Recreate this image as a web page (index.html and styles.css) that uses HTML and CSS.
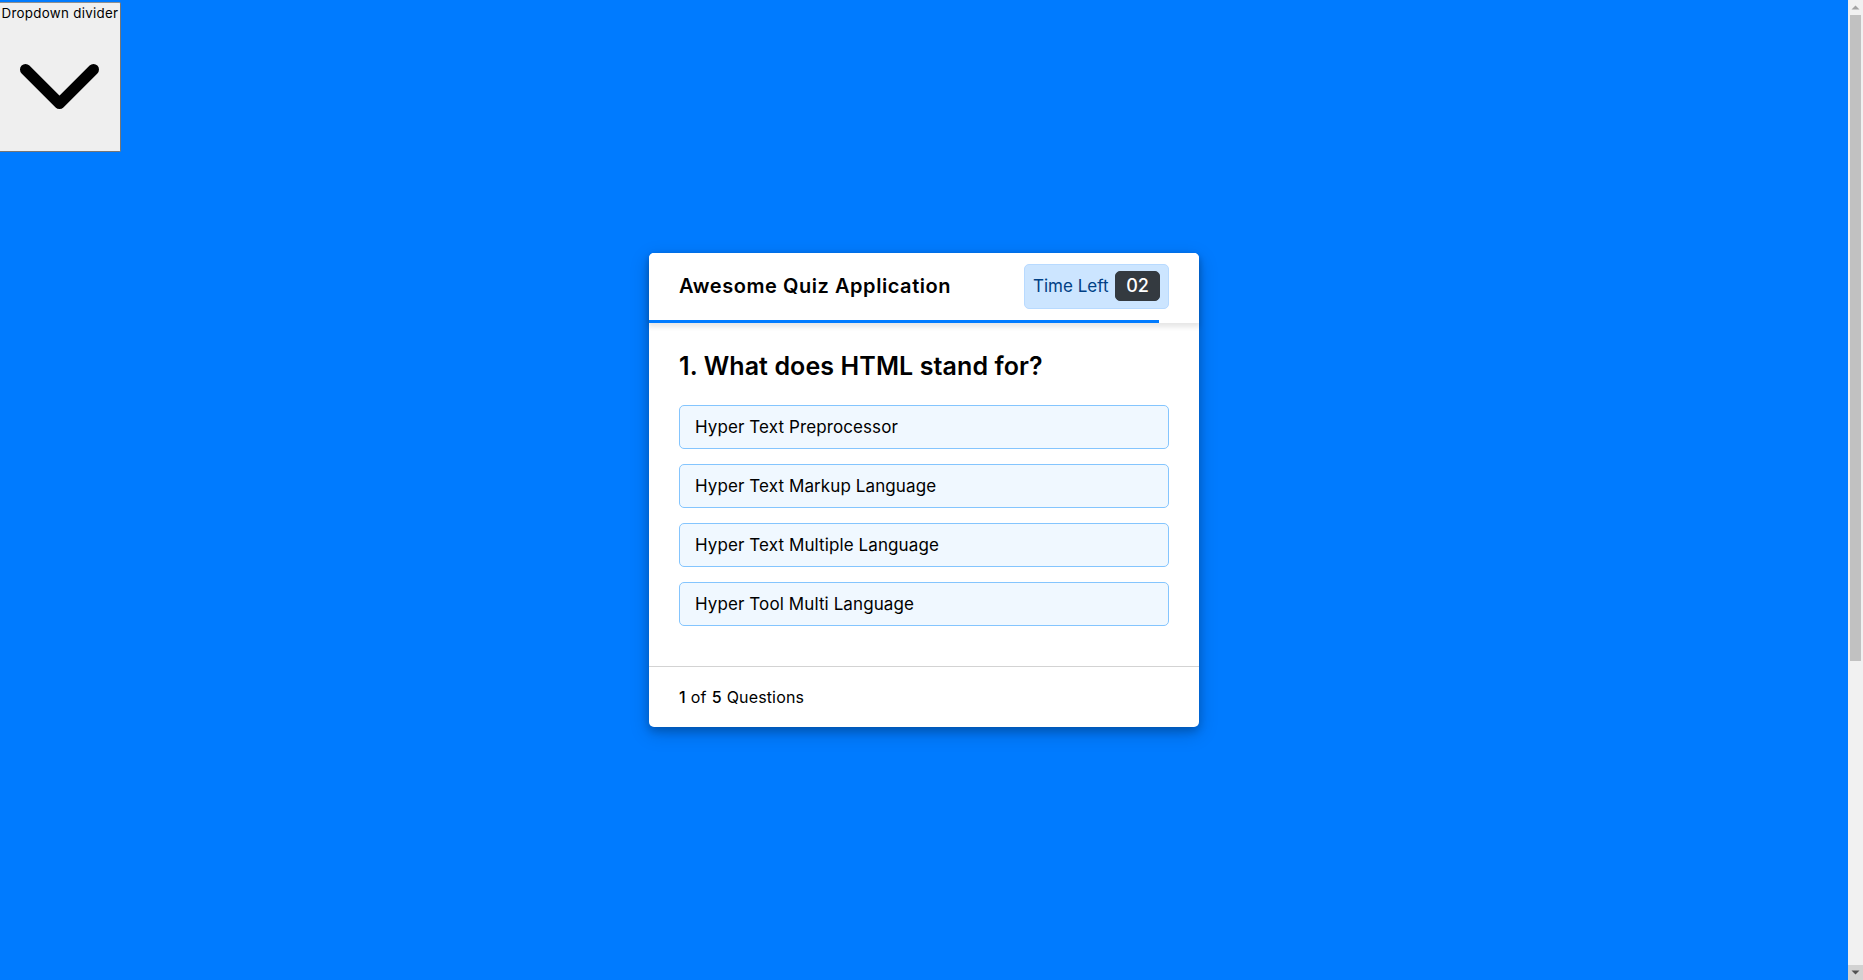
FILE: index.html
```html
<!DOCTYPE html>
<html lang="en">
<head>
<meta charset="utf-8">
<title>Awesome Quiz Application</title>
<link rel="stylesheet" href="styles.css">
</head>
<body>
  <main class="stage">
    <button class="dd-btn" type="button">
      <span class="dd-label">Dropdown divider</span>
      <svg class="dd-icon" width="116" height="128" viewBox="0 0 116 128" aria-hidden="true">
        <polyline points="23.5,45.5 57.5,79.5 91.5,45.5" fill="none" stroke="#000" stroke-width="11" stroke-linecap="round" stroke-linejoin="round"/>
      </svg>
    </button>

    <div class="quiz">
      <header class="quiz-head">
        <div class="head-row">
          <div class="title">Awesome Quiz Application</div>
          <div class="timer">
            <span class="time-left">Time Left</span>
            <span class="timer-sec">02</span>
          </div>
        </div>
        <div class="time-line"></div>
      </header>
      <section class="quiz-body">
        <div class="que-text">1. What does HTML stand for?</div>
        <div class="option-list">
          <div class="option">Hyper Text Preprocessor</div>
          <div class="option">Hyper Text Markup Language</div>
          <div class="option">Hyper Text Multiple Language</div>
          <div class="option">Hyper Tool Multi Language</div>
        </div>
      </section>
      <footer class="quiz-foot">
        <span class="total"><b>1</b>of<b>5</b>Questions</span>
      </footer>
    </div>
  </main>

  <div class="scrollbar" aria-hidden="true">
    <div class="sb-btn sb-up">
      <svg width="15" height="15" viewBox="0 0 15 15"><polygon points="3.5,9.5 7.5,5.5 11.5,9.5" fill="#a3a3a3"/></svg>
    </div>
    <div class="sb-track">
      <div class="sb-thumb"></div>
    </div>
    <div class="sb-btn sb-down">
      <svg width="15" height="15" viewBox="0 0 15 15"><polygon points="3.5,5.5 7.5,9.5 11.5,5.5" fill="#505050"/></svg>
    </div>
  </div>
</body>
</html>
```
FILE: styles.css
```css
* {
  margin: 0;
  padding: 0;
  box-sizing: border-box;
  font-family: "Inter", "Open Sans", sans-serif;
}

html, body {
  background: #007bff;
  height: 980px;
  overflow: hidden;
}

body {
  display: flex;
}

.stage {
  position: relative;
  flex: 1;
  height: 980px;
  display: flex;
  align-items: center;
  justify-content: center;
}

/* native-looking dropdown button in the corner */
.dd-btn {
  position: absolute;
  top: 2px;
  left: 0;
  width: 121px;
  height: 150px;
  background: #efefef;
  border: 1px solid #8f8f8f;
  border-right-color: #767676;
  border-bottom-color: #767676;
  border-left: none;
  border-radius: 0 2px 2px 0;
  display: flex;
  flex-direction: column;
  align-items: center;
  color: #000;
  cursor: pointer;
}

.dd-label {
  display: block;
  font-size: 13.33px;
  letter-spacing: 0.3px;
  line-height: 20px;
  white-space: nowrap;
}

.dd-icon {
  display: block;
  flex: none;
  margin-top: 1px;
}

/* quiz card */
.quiz {
  width: 550px;
  background: #fff;
  border-radius: 5px;
  box-shadow: 0 4px 8px 0 rgba(0, 0, 0, 0.2), 0 6px 20px 0 rgba(0, 0, 0, 0.19);
}

.quiz-head {
  position: relative;
  z-index: 1;
  height: 70px;
  display: flex;
  flex-direction: column;
  border-radius: 5px 5px 0 0;
  box-shadow: 0 3px 5px 1px rgba(0, 0, 0, 0.1);
  background: #fff;
}

.head-row {
  flex: 1;
  display: flex;
  align-items: center;
  justify-content: space-between;
  padding: 0 30px;
}

.title {
  font-size: 20px;
  font-weight: 600;
  letter-spacing: 0.55px;
  color: #000;
}

.timer {
  width: 145px;
  height: 45px;
  padding: 0 8px;
  color: #004085;
  background: #cce5ff;
  border: 1px solid #b8daff;
  border-radius: 5px;
  display: flex;
  align-items: center;
  justify-content: space-between;
}

.time-left {
  font-size: 17px;
  font-weight: 400;
}

.timer-sec {
  width: 45px;
  height: 30px;
  line-height: 28px;
  text-align: center;
  font-size: 18px;
  font-weight: 500;
  color: #fff;
  background: #343a40;
  border: 1px solid #343a40;
  border-radius: 5px;
}

.time-line {
  height: 3px;
  width: 510px;
  background: #007bff;
}

.quiz-body {
  padding: 25px 30px 20px 30px;
  background: #fff;
}

.que-text {
  font-size: 25px;
  line-height: 37.5px;
  font-weight: 600;
  letter-spacing: 0.1px;
  color: #000;
}

.option-list {
  padding: 20px 0;
  display: flex;
  flex-direction: column;
  gap: 15px;
}

.option {
  height: 44px;
  padding: 0 15px;
  display: flex;
  align-items: center;
  font-size: 17px;
  letter-spacing: 0.1px;
  color: #000;
  background: aliceblue;
  border: 1px solid #84c5fe;
  border-radius: 5px;
}

.quiz-foot {
  height: 61px;
  padding: 0 30px;
  display: flex;
  align-items: center;
  border-top: 1px solid lightgrey;
}

.total {
  display: flex;
  gap: 5px;
  font-size: 16px;
  letter-spacing: 0.15px;
  color: #000;
}

.total b {
  font-weight: 500;
}

/* page scrollbar */
.scrollbar {
  flex: none;
  width: 15px;
  height: 980px;
  background: #f1f1f1;
  display: flex;
  flex-direction: column;
}

.sb-btn {
  flex: none;
  height: 15px;
  display: flex;
  align-items: center;
  justify-content: center;
}

.sb-btn svg {
  display: block;
}

.sb-down {
  background: #d2d2d2;
}

.sb-track {
  flex: 1;
  padding: 0 2px;
}

.sb-thumb {
  height: 646px;
  background: #c1c1c1;
}
```
